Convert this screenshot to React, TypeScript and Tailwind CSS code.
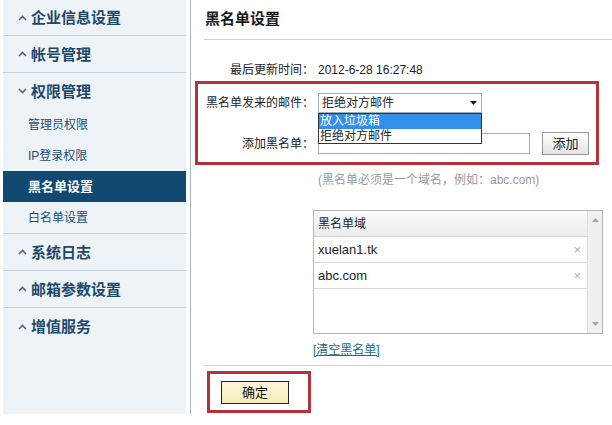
import React from "react";

const font = { fontFamily: "'Liberation Sans', 'Noto Sans CJK SC', sans-serif" };

function Chevron({ down = false }: { down?: boolean }) {
  return (
    <svg width="9" height="6" viewBox="0 0 9 6" className="shrink-0">
      <polyline
        points={down ? "1,1 4.5,4.5 8,1" : "1,5 4.5,1.5 8,5"}
        fill="none"
        stroke="#5b6670"
        strokeWidth="1.6"
      />
    </svg>
  );
}

function SideHeader({ label, down = false, line = true, h = "h-[37px]" }: { label: string; down?: boolean; line?: boolean; h?: string }) {
  return (
    <div className={`${h} flex items-center gap-[4px] pl-[15px] ${line ? "border-b border-[#c6d3de]" : ""}`}>
      <Chevron down={down} />
      <span className="text-[15px] font-bold leading-none text-[#1d4a6b]">{label}</span>
    </div>
  );
}

function SubItem({ label, active = false }: { label: string; active?: boolean }) {
  if (active) {
    return (
      <div className="h-[31px] flex items-center pl-[25px] bg-[#104a72] text-white text-[13px] font-bold">
        {label}
      </div>
    );
  }
  return (
    <div className="h-[31px] flex items-center pl-[25px] text-[12px] text-[#1f4d6d]">{label}</div>
  );
}

function Arrow({ up = false }: { up?: boolean }) {
  return (
    <svg width="7" height="4" viewBox="0 0 7 4">
      <polygon points={up ? "0,4 3.5,0 7,4" : "0,0 3.5,4 7,0"} fill="#a3a3a3" />
    </svg>
  );
}

export default function App() {
  const domains = ["xuelan1.tk", "abc.com"];

  return (
    <div className="w-[612px] h-[425px] flex bg-white overflow-hidden" style={font}>
      {/* Sidebar */}
      <div className="w-[191px] h-[414px] flex shrink-0 border-r border-[#a9b4bd]">
        <div className="ml-[3px] w-[183px] h-full bg-[#eef3f8]">
          <SideHeader label="企业信息设置" h="h-[36px]" />
          <SideHeader label="帐号管理" />
          <SideHeader label="权限管理" down line={false} h="h-[36px]" />
          <SubItem label="管理员权限" />
          <SubItem label="IP登录权限" />
          <SubItem label="黑名单设置" active />
          <div className="border-b border-[#c6d3de]">
            <SubItem label="白名单设置" />
          </div>
          <SideHeader label="系统日志" />
          <SideHeader label="邮箱参数设置" />
          <SideHeader label="增值服务" line={false} />
        </div>
      </div>

      {/* Main */}
      <div className="flex-1 pt-[8px] text-[12px] text-[#222]">
        <h1 className="pl-[14px] h-[22px] leading-[22px] text-[15px] font-bold text-[#1a1a1a]">黑名单设置</h1>
        <div className="ml-[13px] mt-[9px] border-t border-[#c9d3da]" />

        <div className="mt-[20px] h-[20px] flex items-center">
          <span className="w-[123px] text-right">最后更新时间：</span>
          <span className="ml-[4px]">2012-6-28 16:27:48</span>
        </div>

        {/* highlighted form */}
        <div className="mt-[1px] ml-[4px] w-[404px] border-[3px] border-[#b5323b] pt-[9px] pb-[7px]">
          <div className="h-[20px] flex items-center">
            <span className="w-[116px] text-right">黑名单发来的邮件：</span>
            <div className="relative ml-[4px]">
              <div className="w-[164px] h-[20px] border border-[#a5acb2] bg-white flex items-center justify-between pl-[3px] pr-[4px]">
                <span>拒绝对方邮件</span>
                <svg width="7" height="4" viewBox="0 0 7 4">
                  <polygon points="0,0 3.5,4 7,0" fill="#111" />
                </svg>
              </div>
              <div className="absolute left-0 top-[20px] z-10 w-[164px] border border-[#333] bg-white leading-[14px]">
                <div className="bg-[#3390ea] text-white pl-[1px] h-[15px]">放入垃圾箱</div>
                <div className="pl-[1px] h-[14px]">拒绝对方邮件</div>
              </div>
            </div>
          </div>
          <div className="mt-[19px] h-[23px] flex items-center">
            <span className="w-[116px] text-right">添加黑名单：</span>
            <div className="ml-[4px] w-[212px] h-[21px] border border-[#a5acb2] bg-white" />
            <button className="ml-[12px] w-[47px] h-[23px] border border-[#9a9a9a] bg-gradient-to-b from-white to-[#e4e4e4] text-[13px] text-[#222]">
              添加
            </button>
          </div>
        </div>

        <div className="mt-[7px] h-[16px] leading-[16px] ml-[127px] text-[#9a9a9a]">
          (黑名单必须是一个域名，例如：abc.com)
        </div>

        {/* domain list */}
        <div className="mt-[22px] ml-[122px] w-[290px] h-[124px] border border-[#b5b5b5] flex">
          <div className="flex-1">
            <div className="h-[26px] flex items-center pl-[4px] bg-gradient-to-b from-[#fbfbfb] to-[#ececec] border-b border-[#d5d5d5]">
              黑名单域
            </div>
            {domains.map((d) => (
              <div key={d} className="h-[26px] flex items-center justify-between pl-[4px] pr-[6px] border-b border-[#d8d8d8]">
                <span className="text-[13px]">{d}</span>
                <span className="text-[#b0b0b0] text-[13px]">×</span>
              </div>
            ))}
          </div>
          <div className="w-[15px] bg-[#f0f0f0] border-l border-[#e0e0e0] flex flex-col items-center justify-between py-[7px]">
            <Arrow up />
            <Arrow />
          </div>
        </div>

        <div className="mt-[8px] h-[16px] leading-[16px] ml-[122px]">
          <a className="text-[#236b7c] underline">[清空黑名单]</a>
        </div>

        <div className="ml-[13px] mt-[7px] border-t border-[#cdd5db]" />

        <div className="mt-[5px] ml-[16px] w-[104px] h-[42px] border-[3px] border-[#b5323b] pt-[7px] pl-[11px]">
          <button className="w-[68px] h-[23px] border border-[#222] bg-gradient-to-b from-[#fdf8dc] to-[#f6ebb6] text-[13px] text-[#111]">
            确定
          </button>
        </div>
      </div>
    </div>
  );
}
